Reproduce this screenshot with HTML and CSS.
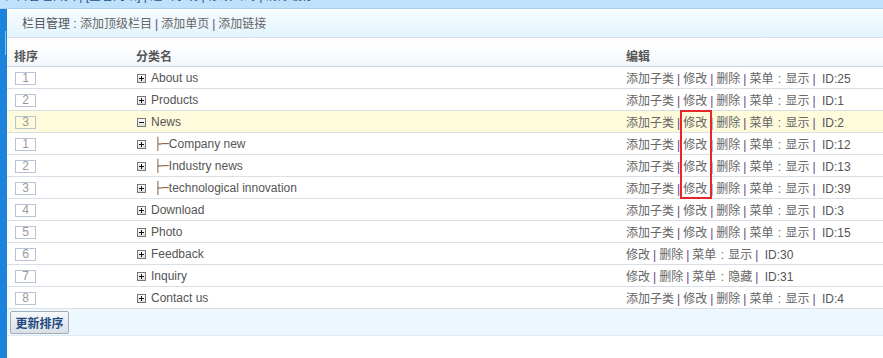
FILE: index.html
```html
<!doctype html>
<html>
<head>
<meta charset="utf-8">
<title>栏目管理</title>
<link rel="stylesheet" href="styles.css">
</head>
<body>
<div class="topbar"><span>栏目管理首页 | [查看网站] | 退出系统 | 修改密码 | 清除缓存</span></div>
<div class="wrap">
	<div class="side"><i></i></div>
	<div class="main">
		<div class="crumb">栏目管理 : <a>添加顶级栏目</a><b>|</b><a>添加单页</a><b>|</b><a>添加链接</a></div>
		<table class="list">
			<tr class="head"><th class="c1">排序</th><th class="c2">分类名</th><th class="c3">编辑</th></tr>
			<tr><td class="c1"><span class="ord">1</span></td><td class="c2"><span class="ico"></span>About us</td><td class="c3"><a>添加子类</a><b>|</b><a>修改</a><b>|</b><a>删除</a><b>|</b><a>菜单<em>:</em>显示</a><b>|</b>&nbsp;ID:25</td></tr>
			<tr><td class="c1"><span class="ord">2</span></td><td class="c2"><span class="ico"></span>Products</td><td class="c3"><a>添加子类</a><b>|</b><a>修改</a><b>|</b><a>删除</a><b>|</b><a>菜单<em>:</em>显示</a><b>|</b>&nbsp;ID:1</td></tr>
			<tr class="on"><td class="c1"><span class="ord">3</span></td><td class="c2"><span class="ico minus"></span>News</td><td class="c3"><a>添加子类</a><b>|</b><a>修改</a><b>|</b><a>删除</a><b>|</b><a>菜单<em>:</em>显示</a><b>|</b>&nbsp;ID:2</td></tr>
			<tr><td class="c1"><span class="ord">1</span></td><td class="c2"><span class="ico"></span>&nbsp;<span class="tree">├─</span>Company new</td><td class="c3"><a>添加子类</a><b>|</b><a>修改</a><b>|</b><a>删除</a><b>|</b><a>菜单<em>:</em>显示</a><b>|</b>&nbsp;ID:12</td></tr>
			<tr><td class="c1"><span class="ord">2</span></td><td class="c2"><span class="ico"></span>&nbsp;<span class="tree">├─</span>Industry news</td><td class="c3"><a>添加子类</a><b>|</b><a>修改</a><b>|</b><a>删除</a><b>|</b><a>菜单<em>:</em>显示</a><b>|</b>&nbsp;ID:13</td></tr>
			<tr><td class="c1"><span class="ord">3</span></td><td class="c2"><span class="ico"></span>&nbsp;<span class="tree">├─</span>technological innovation</td><td class="c3"><a>添加子类</a><b>|</b><a>修改</a><b>|</b><a>删除</a><b>|</b><a>菜单<em>:</em>显示</a><b>|</b>&nbsp;ID:39</td></tr>
			<tr><td class="c1"><span class="ord">4</span></td><td class="c2"><span class="ico"></span>Download</td><td class="c3"><a>添加子类</a><b>|</b><a>修改</a><b>|</b><a>删除</a><b>|</b><a>菜单<em>:</em>显示</a><b>|</b>&nbsp;ID:3</td></tr>
			<tr><td class="c1"><span class="ord">5</span></td><td class="c2"><span class="ico"></span>Photo</td><td class="c3"><a>添加子类</a><b>|</b><a>修改</a><b>|</b><a>删除</a><b>|</b><a>菜单<em>:</em>显示</a><b>|</b>&nbsp;ID:15</td></tr>
			<tr><td class="c1"><span class="ord">6</span></td><td class="c2"><span class="ico"></span>Feedback</td><td class="c3"><a>修改</a><b>|</b><a>删除</a><b>|</b><a>菜单<em>:</em>显示</a><b>|</b>&nbsp;ID:30</td></tr>
			<tr><td class="c1"><span class="ord">7</span></td><td class="c2"><span class="ico"></span>Inquiry</td><td class="c3"><a>修改</a><b>|</b><a>删除</a><b>|</b><a>菜单<em>:</em>隐藏</a><b>|</b>&nbsp;ID:31</td></tr>
			<tr><td class="c1"><span class="ord">8</span></td><td class="c2"><span class="ico"></span>Contact us</td><td class="c3"><a>添加子类</a><b>|</b><a>修改</a><b>|</b><a>删除</a><b>|</b><a>菜单<em>:</em>显示</a><b>|</b>&nbsp;ID:4</td></tr>
			<tr class="foot"><td colspan="3"><button class="btn">更新排序</button></td></tr>
		</table>
		<div class="mark"></div>
	</div>
</div>
</body>
</html>
```

FILE: styles.css
```css
body{
	margin: 0;
	font-family: "Liberation Sans", Arial, "Noto Sans CJK SC", sans-serif;
	font-size: 12px;
	color: #555;
	background: #fff;
}
.topbar{
	height: 8px;
	overflow: hidden;
	background: #bfe2fa;
	border-bottom: 1px solid #a6cfee;
}
.topbar span{
	display: block;
	line-height: 12px;
	margin-top: -10px;
	padding-left: 4px;
	color: #1e4f8e;
	white-space: nowrap;
}
.wrap{
	display: flex;
}
.side{
	width: 7px;
	background: #1c83dc;
	min-height: 349px;
}
.side i{
	display: block;
	width: 1px;
	height: 24px;
	margin: 22px 0 0 5px;
	background: #8cc3f0;
}
.main{
	flex: 1;
	position: relative;
}
.crumb{
	height: 27px;
	line-height: 29px;
	padding-left: 15px;
	background: linear-gradient(#f6fbff, #e3f4fd);
	border-top: 1px solid #fff;
	border-bottom: 1px solid #d5dde5;
	color: #555;
	overflow: hidden;
}
.crumb a, .list a{
	color: #666;
}
b{
	font-weight: normal;
	color: #6a3f7c;
	padding: 0 3px;
}
em{
	display: inline-block;
	width: 12px;
	text-align: center;
	font-style: normal;
}
.list{
	width: 100%;
	margin-top: 6px;
	border-collapse: collapse;
}
.list th{
	text-align: left;
	font-weight: bold;
	color: #555;
	height: 22px;
	padding: 0 0 0 7px;
	background: linear-gradient(#fff, #f2f7fb);
	border-bottom: 1px solid #cbd6e2;
	font-family: "Noto Sans CJK SC", sans-serif;
	font-size: 12px;
}
.list td{
	height: 21px;
	padding: 0 0 0 7px;
	border-bottom: 1px solid #d8dfe7;
	white-space: nowrap;
}
.list .c1{ width: 115px; }
.list .c2{ width: 483px; }
.list .c1 .ord{
	display: inline-block;
	width: 19px;
	height: 11px;
	line-height: 11px;
	margin-left: 1px;
	border: 1px solid #b8c4d2;
	text-align: center;
	color: #999;
	vertical-align: middle;
}
.list tr.on td{
	background: #fefbdc;
}
.ico{
	display: inline-block;
	width: 7px;
	height: 7px;
	margin: 0 5px 0 1px;
	border: 1px solid #777;
	background: linear-gradient(#fff, #ddd);
	position: relative;
	vertical-align: -1px;
}
.ico:before, .ico:after{
	content: "";
	position: absolute;
	background: #111;
}
.ico:before{
	left: 1px;
	top: 3px;
	width: 5px;
	height: 1px;
}
.ico:after{
	left: 3px;
	top: 1px;
	width: 1px;
	height: 5px;
}
.ico.minus:after{
	display: none;
}
.tree{
	font-family: "DejaVu Sans", sans-serif;
	color: #8a5a3a;
}
.list tr.foot td{
	height: 26px;
	padding: 0 0 0 3px;
	background: #edf7fe;
	border-bottom: 1px solid #dfeaf3;
}
.btn{
	width: 59px;
	height: 23px;
	padding: 0;
	font-family: "Noto Sans CJK SC", sans-serif;
	font-size: 12px;
	font-weight: bold;
	color: #234a80;
	background: linear-gradient(#f7f8fa, #d8dfe6);
	border: 1px solid #a3adb8;
	border-radius: 2px;
	vertical-align: middle;
}
.mark{
	position: absolute;
	left: 673px;
	top: 101px;
	width: 28px;
	height: 85px;
	border: 2px solid #e5262c;
}
```
